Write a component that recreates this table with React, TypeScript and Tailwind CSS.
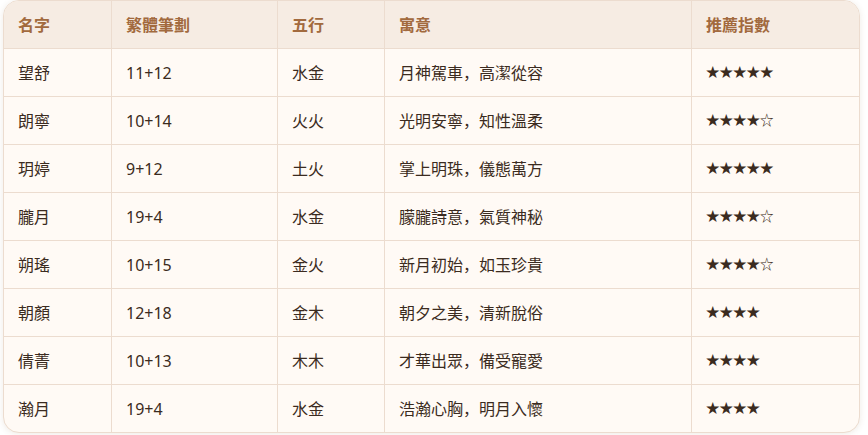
import React from "react";

type Row = {
  name: string;
  strokes: string;
  wuxing: string;
  meaning: string;
  stars: string;
};

const rows: Row[] = [
  { name: "望舒", strokes: "11+12", wuxing: "水金", meaning: "月神駕車，高潔從容", stars: "★★★★★" },
  { name: "朗寧", strokes: "10+14", wuxing: "火火", meaning: "光明安寧，知性溫柔", stars: "★★★★☆" },
  { name: "玥婷", strokes: "9+12", wuxing: "土火", meaning: "掌上明珠，儀態萬方", stars: "★★★★★" },
  { name: "朧月", strokes: "19+4", wuxing: "水金", meaning: "朦朧詩意，氣質神秘", stars: "★★★★☆" },
  { name: "朔瑤", strokes: "10+15", wuxing: "金火", meaning: "新月初始，如玉珍貴", stars: "★★★★☆" },
  { name: "朝顏", strokes: "12+18", wuxing: "金木", meaning: "朝夕之美，清新脫俗", stars: "★★★★" },
  { name: "倩菁", strokes: "10+13", wuxing: "木木", meaning: "才華出眾，備受寵愛", stars: "★★★★" },
  { name: "瀚月", strokes: "19+4", wuxing: "水金", meaning: "浩瀚心胸，明月入懷", stars: "★★★★" },
];

const headers = ["名字", "繁體筆劃", "五行", "寓意", "推薦指數"];

const App = () => {
  return (
    <div className="w-[868px] h-[435px] bg-white font-['Noto_Sans','Noto_Sans_CJK_SC',sans-serif]">
      <div className="ml-[3px] w-[857px] border border-[#ecdccf] rounded-2xl overflow-hidden bg-[#fffaf5] shadow-[0_1px_6px_rgba(120,80,40,0.12)]">
        <div className="grid grid-cols-[108px_166px_107px_307px_167px] bg-[#f6ece3]">
          {headers.map((h, i) => (
            <div
              key={h}
              className={`h-12 flex items-center px-[14px] text-base font-semibold text-[#a26a3e] border-b border-[#ecdccf] ${i < 4 ? "border-r" : ""}`}
            >
              {h}
            </div>
          ))}
        </div>
        {rows.map((r, ri) => {
          const cells = [r.name, r.strokes, r.wuxing, r.meaning, r.stars];
          const last = ri === rows.length - 1;
          return (
            <div key={r.name} className="grid grid-cols-[108px_166px_107px_307px_167px]">
              {cells.map((c, i) => (
                <div
                  key={i}
                  className={`flex items-center px-[14px] text-[#3b2b20] border-[#ecdccf] ${i === 4 ? "text-[13.5px]" : "text-base"} ${last ? "h-[47px]" : "h-12 border-b"} ${i < 4 ? "border-r" : ""}`}
                >
                  {c}
                </div>
              ))}
            </div>
          );
        })}
      </div>
    </div>
  );
};

export default App;
